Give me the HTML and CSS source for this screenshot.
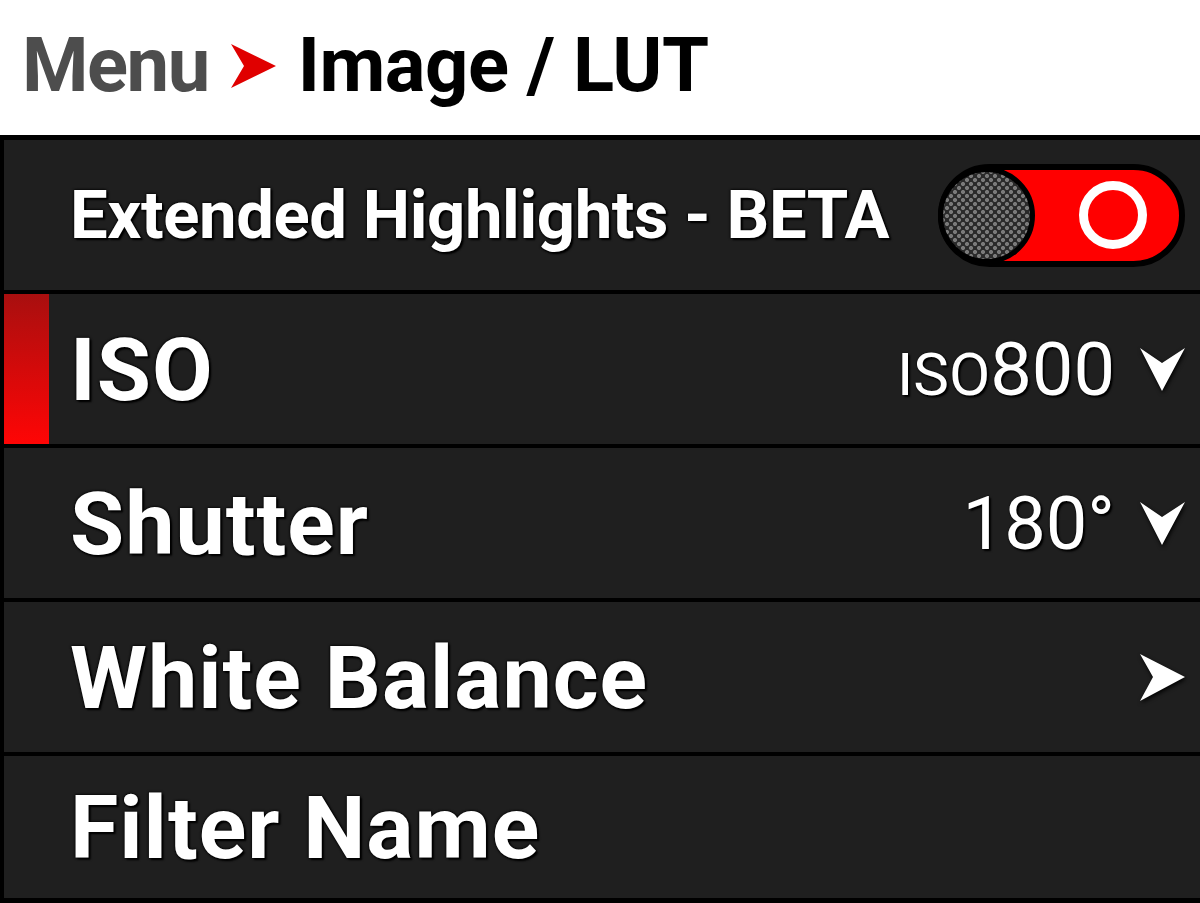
FILE: index.html
```html
<!DOCTYPE html>
<html lang="en">
<head>
    <meta charset="UTF-8">
    <title>Image / LUT</title>
    <link rel="stylesheet" href="styles.css">
</head>
<body>
    <div class="screen">
        <div class="header">
            <span class="crumb">Menu</span>
            <svg class="crumb-arrow" width="45" height="44" viewBox="0 0 45 44"><polygon points="0,0 45,22 0,44 13,22" fill="#e00000"/></svg>
            <span class="title">Image / LUT</span>
        </div>
        <div class="list">
            <div class="row row-toggle">
                <span class="label small">Extended Highlights - BETA</span>
                <div class="toggle">
                    <div class="knob"></div>
                    <div class="ring"></div>
                </div>
            </div>
            <div class="row selected">
                <div class="marker"></div>
                <span class="label">ISO</span>
                <span class="value"><span class="unit">ISO</span>800</span>
                <svg class="chev" width="45" height="43" viewBox="0 0 45 43"><polygon points="0,0 22,15 45,0 22,43" fill="#fff"/></svg>
            </div>
            <div class="row">
                <span class="label">Shutter</span>
                <span class="value">180°</span>
                <svg class="chev" width="45" height="43" viewBox="0 0 45 43"><polygon points="0,0 22,15 45,0 22,43" fill="#fff"/></svg>
            </div>
            <div class="row">
                <span class="label">White Balance</span>
                <svg class="chev" width="45" height="47" viewBox="0 0 45 47"><polygon points="0,0 45,23 0,47 13,23" fill="#fff"/></svg>
            </div>
            <div class="row last">
                <span class="label">Filter Name</span>
            </div>
        </div>
    </div>
</body>
</html>
```

FILE: styles.css
```css
body {margin: 0; background: #000; font-family: Roboto, "Noto Sans", sans-serif;}
.screen {width: 1200px; height: 903px; overflow: hidden; background: #000;}

/* header */
.header {background: #fff; border-bottom: 5px solid #000; display: flex; align-items: center; padding-left: 22px; gap: 22px; box-sizing: border-box; height: 140px; padding-bottom: 6px;}
.crumb {font-size: 76px; font-weight: 700; color: #4d4d4d; letter-spacing: -1.5px;}
.title {font-size: 76px; font-weight: 700; color: #000; letter-spacing: -0.5px;}
.crumb-arrow {margin-top: 2px;}

/* rows */
.list {display: flex; flex-direction: column; gap: 4px; padding-left: 4px;}
.row {height: 150px; background: #1f1f1f; display: flex; align-items: center; padding: 0 15px 0 66px;}
.row.last {height: 142px;}
.row.selected {padding-left: 0;}
.marker {width: 45px; align-self: stretch; margin-right: 21px; background: linear-gradient(to bottom, #a80f0f, #ff0505);}
.label {color: #fff; font-size: 88px; font-weight: 700; flex: 1; letter-spacing: 1px; text-shadow: 0 0 2px #000, 0 0 3px #000, 2px 2px 2px #000;}
.label.small {font-size: 67px; letter-spacing: -0.4px;}
.value {color: #fff; font-size: 74px; font-weight: 400; margin-right: 25px; text-shadow: 0 0 2px #000, 2px 2px 2px #000;}
.unit {font-size: 60px;}
.chev {filter: drop-shadow(1px 2px 2px #000);}

/* toggle */
.toggle {width: 247px; height: 103px; box-sizing: border-box; border: 6px solid #000; border-radius: 52px; background: #ff0000; display: flex; align-items: center; justify-content: space-between; padding-right: 32px;}
.knob {width: 97px; height: 97px; margin-left: -6px; box-sizing: border-box; border: 5px solid #000; border-radius: 50%; background-color: #2a2a2a; background-image: radial-gradient(circle, #7a7a7a 1.6px, transparent 2.4px), radial-gradient(circle, #7a7a7a 1.6px, transparent 2.4px); background-size: 8px 8px; background-position: 0 0, 4px 4px;}
.ring {width: 68px; height: 68px; box-sizing: border-box; border: 9px solid #fff; border-radius: 50%;}
```
